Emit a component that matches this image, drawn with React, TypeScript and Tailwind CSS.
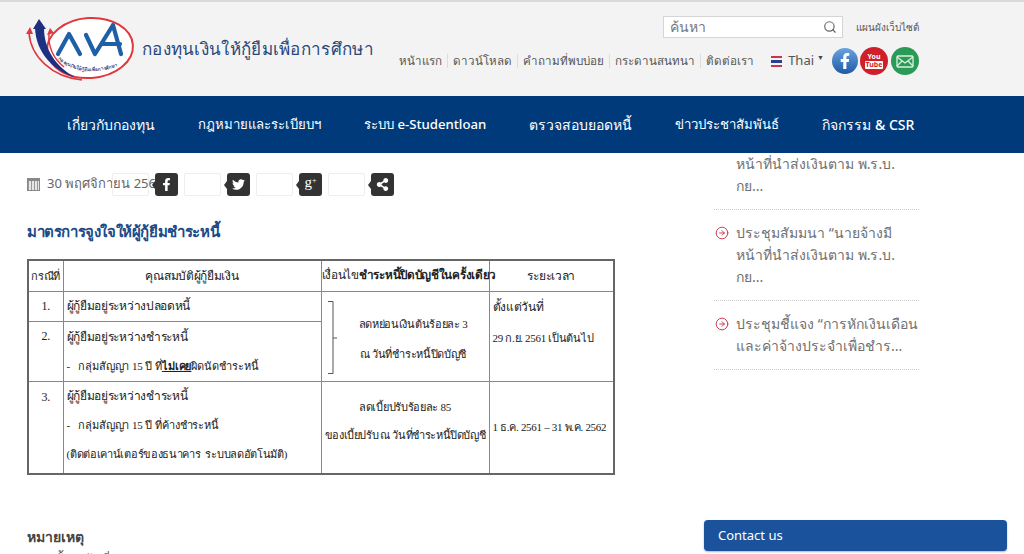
import { Search, CircleArrowRight } from "lucide-react";
import { FaFacebookF, FaTwitter, FaShareAlt } from "react-icons/fa";

const topLinks = ["หน้าแรก", "ดาวน์โหลด", "คำถามที่พบบ่อย", "กระดานสนทนา", "ติดต่อเรา"];
const navItems = [
  { label: "เกี่ยวกับกองทุน", size: "text-[14px]" },
  { label: "กฎหมายและระเบียบฯ", size: "text-[13.2px]" },
  { label: "ระบบ e-Studentloan", size: "text-[13.2px]" },
  { label: "ตรวจสอบยอดหนี้", size: "text-[14px]" },
  { label: "ข่าวประชาสัมพันธ์", size: "text-[13.2px]" },
  { label: "กิจกรรม & CSR", size: "text-[14px]" },
];

function Logo() {
  return (
    <svg width="112" height="72" viewBox="0 0 112 72" className="shrink-0">
      <ellipse cx="64" cy="35" rx="43" ry="30" transform="rotate(-4 64 35)" fill="#fff" stroke="#e0383e" strokeWidth="2" />
      <path d="M3 20 C5 44 26 64 56 67" fill="none" stroke="#e0383e" strokeWidth="1.6" />
      <path d="M23 20 C22 34 28 46 38 54" fill="none" stroke="#e0383e" strokeWidth="1.4" />
      <path d="M9 15 L18 15 C18 36 30 54 50 65 C28 58 10 40 9 15 Z" fill="#1c2f80" />
      <path d="M7 16 L13 6 L20 16 Z" fill="#1c2f80" />
      <path d="M0 21 L4 14 L7 21 Z" fill="#e0383e" />
      <path d="M21 22 L24 15 L28 20 Z" fill="#e0383e" />
      <path d="M32 41 L43 21 L54 41 M60 22 L69 41 L87 12 L95 41 M77 31 L94 31" fill="none" stroke="#1f5fa8" strokeWidth="4.2" strokeLinecap="round" strokeLinejoin="round" />
      <path id="logo-curve" d="M32 46 Q58 68 100 50" fill="none" />
      <text fontSize="4.6" fontWeight="700" fill="#3a3f7a" fontFamily="'Noto Sans', sans-serif">
        <textPath href="#logo-curve">กองทุนเงินให้กู้ยืมเพื่อการศึกษา</textPath>
      </text>
    </svg>
  );
}

function ShareButton({ children }: { children: React.ReactNode }) {
  return (
    <div className="flex items-center gap-[6px]">
      <div className="w-[37px] h-[23px] border border-[#eeeeee] rounded-[2px]" />
      <div className="relative w-[23px] h-[23px] bg-[#333333] rounded-[3px] flex items-center justify-center text-white text-[13px]">
        <span className="absolute left-[-3px] top-[8px] w-0 h-0 border-y-[4px] border-y-transparent border-r-[3px] border-r-[#333333]" />
        {children}
      </div>
    </div>
  );
}

function NewsItem({ lines, icon = true }: { lines: string[]; icon?: boolean }) {
  return (
    <div className="flex gap-[8px] border-b border-dotted border-[#cccccc] -ml-px w-[205px]">
      <div className="w-[14px] shrink-0 pt-[4px] pl-px">
        {icon && <CircleArrowRight size={14} strokeWidth={1.6} className="text-[#c8344d]" />}
      </div>
      <div className="text-[14px] leading-[22px] text-[#707070] pb-[12px]">
        {lines.map((l) => (
          <div key={l} className="whitespace-nowrap">{l}</div>
        ))}
      </div>
    </div>
  );
}

export default function App() {
  return (
    <div className="w-[1024px] h-[554px] overflow-hidden bg-white font-['Noto_Sans',sans-serif]">
      <header className="h-[96px] bg-[#f3f3f3] border-t-2 border-[#d9d9d9] flex justify-between pl-[26px] pr-[105px]">
        <div className="flex items-center gap-[4px]">
          <Logo />
          <div className="text-[17px] tracking-[0.3px] font-medium text-[#28477c] whitespace-nowrap">กองทุนเงินให้กู้ยืมเพื่อการศึกษา</div>
        </div>
        <div className="flex flex-col items-end pt-[14px]">
          <div className="flex items-center gap-[13px]">
            <div className="w-[180px] h-[22px] bg-white border border-[#d5d5d5] flex items-center justify-between pl-[6px] pr-[5px]">
              <span className="text-[14px] text-[#777777] leading-none">ค้นหา</span>
              <Search size={14} className="text-[#666666]" />
            </div>
            <span className="text-[10px] text-[#555555] whitespace-nowrap">แผนผังเว็บไซต์</span>
          </div>
          <div className="flex items-center mt-[9px]">
            <div className="flex items-center text-[11.6px] text-[#555555] whitespace-nowrap">
              {topLinks.map((t, i) => (
                <span key={t} className={i > 0 ? "border-l border-[#dddddd] ml-[5px] pl-[5px] leading-[14px]" : "leading-[14px]"}>{t}</span>
              ))}
            </div>
            <div className="flex flex-col gap-[2px] w-[11px] ml-[17px]">
              <span className="h-[2px] bg-[#c8344d]" />
              <span className="h-[3px] bg-[#2c3f8f]" />
              <span className="h-[2px] bg-[#c8344d]" />
            </div>
            <span className="text-[13px] text-[#555555] ml-[6px]">Thai</span>
            <span className="text-[7px] text-[#444444] ml-[3px] mb-[6px]">▼</span>
            <div className="flex items-center gap-[2px] ml-[8px]">
              <span className="w-[26px] h-[26px] rounded-full bg-gradient-to-b from-[#6aa3de] to-[#1d5aa6] flex items-center justify-center text-white text-[16px]"><FaFacebookF /></span>
              <span className="w-[28px] h-[28px] rounded-full bg-[#cf1f2a] flex flex-col items-center justify-center text-white text-[7px] font-bold leading-[8px]"><span>You</span><span className="bg-white text-[#cf1f2a] rounded-[1px] px-[1px]">Tube</span></span>
              <span className="w-[28px] h-[28px] rounded-full bg-[#2b9a56] flex items-center justify-center ml-[1px]">
                <svg width="18" height="13" viewBox="0 0 18 13" fill="none" stroke="#d8f2df" strokeWidth="1.3">
                  <rect x="1" y="1" width="16" height="11" rx="1" />
                  <path d="M1 2 L9 8 L17 2 M1 11 L6 6 M17 11 L12 6" />
                </svg>
              </span>
            </div>
          </div>
        </div>
      </header>

      <nav className="h-[57px] bg-[#003a7a] flex items-center gap-[43px] pl-[67px] font-medium text-white whitespace-nowrap">
        {navItems.map((n) => (
          <span key={n.label} className={n.size}>{n.label}</span>
        ))}
      </nav>

      <main className="flex h-[401px] overflow-hidden pl-[27px]">
        <div className="w-[688px] shrink-0">
          <div className="flex items-center h-[24px] mt-[19px]">
            <div className="w-[85px] flex items-center gap-[7px] text-[13px] text-[#666666] whitespace-nowrap">
              <span className="w-[13px] h-[13px] shrink-0 border border-[#888888] border-t-[3px] bg-[repeating-linear-gradient(90deg,#999999_0_1px,#e6e6e6_1px_3px)]" />
              30 พฤศจิกายน 2561
            </div>
            <div className="flex gap-[6px] relative">
              <ShareButton><FaFacebookF /></ShareButton>
              <ShareButton><FaTwitter /></ShareButton>
              <ShareButton><span className="font-['Liberation_Serif',serif] text-[15px] leading-none mb-[3px]">g<sup className="text-[8px]">+</sup></span></ShareButton>
              <ShareButton><FaShareAlt /></ShareButton>
            </div>
          </div>
          <h1 className="text-[15px] font-semibold text-[#1c4a86] mt-[22px] leading-[26px] tracking-[-0.4px]">มาตรการจูงใจให้ผู้กู้ยืมชำระหนี้</h1>
          <table className="mt-[15px] w-[586px] table-fixed border-collapse border-2 border-[#666666] font-['Liberation_Serif','Noto_Sans',serif] text-[11px] tracking-[-0.3px] text-[#222222]">
            <colgroup>
              <col className="w-[35px]" />
              <col className="w-[258px]" />
              <col className="w-[168px]" />
              <col className="w-[125px]" />
            </colgroup>
            <tbody>
              <tr className="h-[31px] text-center">
                <td className="border border-[#888888] whitespace-nowrap">กรณีที่</td>
                <td className="border border-[#888888] text-[12px]">คุณสมบัติผู้กู้ยืมเงิน</td>
                <td className="border border-[#888888] whitespace-nowrap text-[11.75px]">เงื่อนไข<b>ชำระหนี้ปิดบัญชีในครั้งเดียว</b></td>
                <td className="border border-[#888888] text-[12px]">ระยะเวลา</td>
              </tr>
              <tr className="h-[30px]">
                <td className="border border-[#888888] text-center text-[12px]">1.</td>
                <td className="border border-[#888888] px-[3px] text-[12px]">ผู้กู้ยืมอยู่ระหว่างปลอดหนี้</td>
                <td rowSpan={2} className="relative border border-[#888888] text-center pl-[16px] pt-[5px]">
                  <svg width="9" height="73" viewBox="0 0 9 73" className="absolute left-[6px] top-[9px]">
                    <path d="M0 0.5 H5 V72.5 H0 M5 37 H9" fill="none" stroke="#555555" />
                  </svg>
                  <div className="leading-[30px]">ลดหย่อนเงินต้นร้อยละ 3</div>
                  <div className="leading-[30px]">ณ วันที่ชำระหนี้ปิดบัญชี</div>
                </td>
                <td rowSpan={2} className="border border-[#888888] px-[3px] pt-[3px] align-top">
                  <div className="leading-[24px] text-[12px]">ตั้งแต่วันที่</div>
                  <div className="leading-[30px] mt-[4px] whitespace-nowrap">29 ก.ย. 2561 เป็นต้นไป</div>
                </td>
              </tr>
              <tr className="h-[59px]">
                <td className="border border-[#888888] text-center align-top pt-[4px] leading-[20px] text-[12px]">2.</td>
                <td className="border border-[#888888] px-[3px]">
                  <div className="leading-[30px] text-[12px]">ผู้กู้ยืมอยู่ระหว่างชำระหนี้</div>
                  <div className="leading-[29px] whitespace-nowrap tracking-[-0.1px]">-&nbsp;&nbsp; กลุ่มสัญญา 15 ปี ที่<b className="underline">ไม่เคย</b>ผิดนัดชำระหนี้</div>
                </td>
              </tr>
              <tr className="h-[93px]">
                <td className="border border-[#888888] text-center align-top pt-[5px] leading-[20px] text-[12px]">3.</td>
                <td className="border border-[#888888] px-[3px] align-top">
                  <div className="leading-[29px] text-[12px]">ผู้กู้ยืมอยู่ระหว่างชำระหนี้</div>
                  <div className="leading-[29px] tracking-[-0.1px]">-&nbsp;&nbsp; กลุ่มสัญญา 15 ปี ที่ค้างชำระหนี้</div>
                  <div className="leading-[29px] whitespace-nowrap">(ติดต่อเคาน์เตอร์ของธนาคาร&nbsp; ระบบลดอัตโนมัติ)</div>
                </td>
                <td className="border border-[#888888] text-center pb-[12px]">
                  <div className="leading-[28px]">ลดเบี้ยปรับร้อยละ 85</div>
                  <div className="leading-[28px] whitespace-nowrap tracking-[-0.4px]">ของเบี้ยปรับ ณ วันที่ชำระหนี้ปิดบัญชี</div>
                </td>
                <td className="border border-[#888888] px-[3px] whitespace-nowrap">1 ธ.ค. 2561 – 31 พ.ค. 2562</td>
              </tr>
            </tbody>
          </table>
          <h2 className="text-[14px] font-semibold text-[#444444] mt-[50px] leading-[24px]">หมายเหตุ</h2>
          <div className="text-[13px] text-[#555555] leading-[20px] pl-[28px]">ตั้งแต่วันที่</div>
        </div>

        <aside className="w-[303px] shrink-0 flex flex-col">
          <NewsItem icon={false} lines={["หน้าที่นำส่งเงินตาม พ.ร.บ.", "กย..."]} />
          <div className="mt-[12px]">
            <NewsItem lines={["ประชุมสัมมนา “นายจ้างมี", "หน้าที่นำส่งเงินตาม พ.ร.บ.", "กย..."]} />
          </div>
          <div className="mt-[12px]">
            <NewsItem lines={["ประชุมชี้แจง “การหักเงินเดือน", "และค่าจ้างประจำเพื่อชำร..."]} />
          </div>
          <div className="mt-[150px] -ml-[11px] w-[303px] h-[31px] bg-[#1a539c] rounded-[4px] shadow-[0_1px_2px_rgba(0,0,0,0.3)] flex items-center pl-[14px] text-[13px] text-white shrink-0">Contact us</div>
        </aside>
      </main>
    </div>
  );
}
